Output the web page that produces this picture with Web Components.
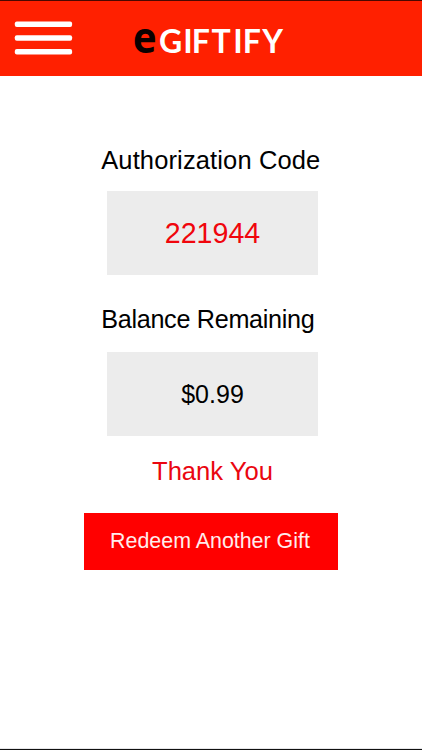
<!DOCTYPE html>
<html lang="en">
<head>
<meta charset="utf-8">
<title>eGiftify</title>
<style>
    body {
        margin: 0;
        background: #fff;
        font-family: "Liberation Sans", Arial, sans-serif;
    }
</style>
</head>
<body>
<gift-app>
    <gift-header slot="header"></gift-header>
    <code-panel label="Authorization Code" style="--label-size: 25.5px; --label-spacing: 0.13px; --value-size: 28.6px; --value-color: #f0050c">221944</code-panel>
    <code-panel label="Balance Remaining" style="--label-size: 25.2px; --label-spacing: -0.3px; --value-size: 25px; --box-gap: 18.3px">$0.99</code-panel>
    <thank-note>Thank You</thank-note>
    <redeem-button>Redeem Another Gift</redeem-button>
</gift-app>

<script>
// Page frame: header on top, centered content, thin line at the bottom
class GiftApp extends HTMLElement {
    constructor() {
        super();
        this.attachShadow({ mode: 'open' });
        this.shadowRoot.innerHTML = `
            <style>
                :host {
                    display: flex;
                    flex-direction: column;
                    box-sizing: border-box;
                    width: 422px;
                    height: 750px;
                    border-bottom: 1px solid #111;
                    box-shadow: inset 0 -1px #e6e6e9;
                }
                main {
                    display: flex;
                    flex-direction: column;
                    align-items: center;
                    padding-top: 69px;
                }
            </style>
            <slot name="header"></slot>
            <main><slot></slot></main>
        `;
    }
}

// Red bar with the menu icon and the logo
class GiftHeader extends HTMLElement {
    constructor() {
        super();
        this.attachShadow({ mode: 'open' });
        this.shadowRoot.innerHTML = `
            <style>
                :host {
                    display: flex;
                    box-sizing: border-box;
                    height: 76px;
                    background: #ff2000;
                    border-top: 1px solid #4a0800;
                }
                button {
                    border: 0;
                    margin: 0;
                    padding: 19px 0 0 14px;
                    width: 120px;
                    background: none;
                    display: flex;
                    align-items: flex-start;
                }
                svg { display: block; }
            </style>
            <button aria-label="Menu">
                <svg width="60" height="38" viewBox="0 0 60 38" fill="#fff">
                    <rect x="0.8" y="1.4" width="57.3" height="5.5" rx="2"/>
                    <rect x="0.8" y="15.2" width="57.3" height="5.5" rx="2"/>
                    <rect x="0.8" y="29" width="57.3" height="5.5" rx="2"/>
                </svg>
            </button>
            <svg width="180" height="75" viewBox="120 1 180 75">
                <text x="132.8" y="52.6" font-family="Noto Sans, sans-serif" font-weight="700" font-size="43" textLength="24" lengthAdjust="spacingAndGlyphs" fill="#0a0000">e</text>
                <text x="159 183.3 191.8 211.5 233.3 242.8 262.3" y="53" font-family="Lato, sans-serif" font-weight="700" font-size="32" fill="#fff">GIFTIFY</text>
            </svg>
        `;
    }
}

// Label with a grey value box under it
class CodePanel extends HTMLElement {
    constructor() {
        super();
        this.attachShadow({ mode: 'open' });
        this.shadowRoot.innerHTML = `
            <style>
                :host {
                    display: block;
                    width: 220px;
                    margin-bottom: 29px;
                }
                .label {
                    padding-left: 0.2px;
                    line-height: 30px;
                    font-size: var(--label-size);
                    letter-spacing: var(--label-spacing, 0);
                    white-space: nowrap;
                    color: #000;
                }
                .value {
                    display: flex;
                    align-items: center;
                    justify-content: center;
                    width: 211px;
                    height: 84px;
                    margin: var(--box-gap, 16px) 0 0 6px;
                    background: #ececec;
                    font-size: var(--value-size);
                    color: var(--value-color, #000);
                }
            </style>
            <div class="label"></div>
            <div class="value"><slot></slot></div>
        `;
    }

    connectedCallback() {
        this.shadowRoot.querySelector('.label').textContent = this.getAttribute('label');
    }
}

class ThankNote extends HTMLElement {
    constructor() {
        super();
        this.attachShadow({ mode: 'open' });
        this.shadowRoot.innerHTML = `
            <style>
                :host {
                    display: block;
                    margin-top: -9.3px;
                    padding-left: 3px;
                    line-height: 30px;
                    font-size: 25.6px;
                    color: #ea0610;
                }
            </style>
            <slot></slot>
        `;
    }
}

class RedeemButton extends HTMLElement {
    constructor() {
        super();
        this.attachShadow({ mode: 'open' });
        this.shadowRoot.innerHTML = `
            <style>
                :host { display: block; margin-top: 27.4px; }
                button {
                    display: block;
                    width: 254px;
                    height: 56.4px;
                    border: 0;
                    padding: 0 2px 1px 0;
                    background: #f00;
                    color: #ffecec;
                    font-family: inherit;
                    font-size: 21.4px;
                }
            </style>
            <button><slot></slot></button>
        `;
    }
}

customElements.define('gift-app', GiftApp);
customElements.define('gift-header', GiftHeader);
customElements.define('code-panel', CodePanel);
customElements.define('thank-note', ThankNote);
customElements.define('redeem-button', RedeemButton);
</script>
</body>
</html>
